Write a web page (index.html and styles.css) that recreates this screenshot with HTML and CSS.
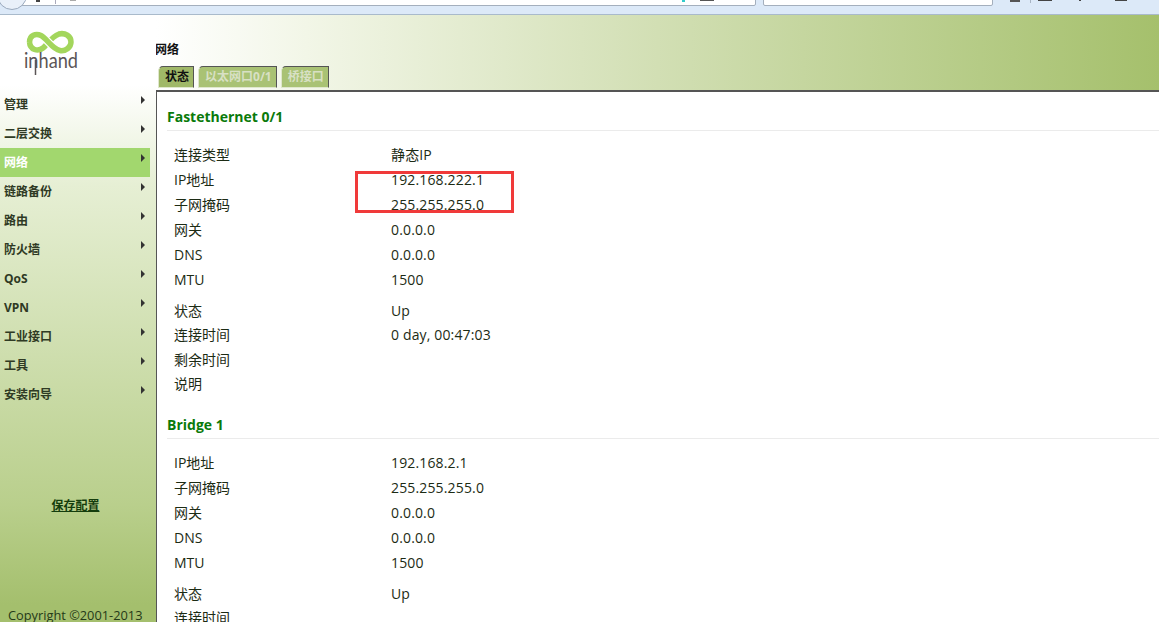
FILE: index.html
```html
<!DOCTYPE html>
<html lang="zh">
<head>
<meta charset="utf-8">
<title>网络</title>
<link rel="stylesheet" href="styles.css">
</head>
<body>
<div class="chrome">
  <div class="addr"></div>
  <div class="search"></div>
  <div class="back"></div>
  <span class="tick t1"></span>
  <span class="tick t2"></span>
  <span class="tick t3"></span>
  <span class="tick t4"></span>
  <span class="tick t5"></span>
  <span class="tick t6"></span>
  <span class="tick t7"></span>
  <span class="tick t8"></span>
  <span class="tick t9"></span>
  <span class="tick t10"></span>
</div>
<div class="page">
  <aside class="side">
    <div class="logo">
      <svg width="60" height="50" viewBox="22 28 60 50">
        <path class="band" d="M29.500 42C30 50 38 52 43 48C47 45 51 37 59 34C65 32.500 71 36 71 42"/>
        <path class="halo" d="M43 37C47 39.500 51 47 58 49.500"/>
        <path class="band" d="M29.500 42C29.500 35 36 33 41 35.500C47 38.500 52 49 60 50.500C66 51.500 71 47 71 42"/>
        <text x="24" y="68" class="logotext" textLength="54" lengthAdjust="spacingAndGlyphs">inhand</text>
        <line x1="35.500" y1="60" x2="35.500" y2="75" class="logostem"/>
      </svg>
    </div>
    <nav class="menu">
      <a class="item">管理<i></i></a>
      <a class="item">二层交换<i></i></a>
      <a class="item on">网络<i></i></a>
      <a class="item">链路备份<i></i></a>
      <a class="item">路由<i></i></a>
      <a class="item">防火墙<i></i></a>
      <a class="item">QoS<i></i></a>
      <a class="item">VPN<i></i></a>
      <a class="item">工业接口<i></i></a>
      <a class="item">工具<i></i></a>
      <a class="item">安装向导<i></i></a>
    </nav>
    <a class="save">保存配置</a>
    <div class="copy">Copyright ©2001-2013</div>
  </aside>
  <main class="main">
    <header class="head">
      <h1>网络</h1>
      <div class="tabs">
        <span class="tab active">状态</span>
        <span class="tab">以太网口0/1</span>
        <span class="tab">桥接口</span>
      </div>
    </header>
    <section class="content">
      <h2>Fastethernet 0/1</h2>
      <dl class="rows">
        <div><dt>连接类型</dt><dd>静态IP</dd></div>
        <div><dt>IP地址</dt><dd>192.168.222.1</dd></div>
        <div><dt>子网掩码</dt><dd>255.255.255.0</dd></div>
        <div><dt>网关</dt><dd>0.0.0.0</dd></div>
        <div><dt>DNS</dt><dd>0.0.0.0</dd></div>
        <div><dt>MTU</dt><dd>1500</dd></div>
      </dl>
      <dl class="rows second">
        <div><dt>状态</dt><dd>Up</dd></div>
        <div><dt>连接时间</dt><dd>0 day, 00:47:03</dd></div>
        <div><dt>剩余时间</dt><dd></dd></div>
        <div><dt>说明</dt><dd></dd></div>
      </dl>
      <h2 class="next">Bridge 1</h2>
      <dl class="rows">
        <div><dt>IP地址</dt><dd>192.168.2.1</dd></div>
        <div><dt>子网掩码</dt><dd>255.255.255.0</dd></div>
        <div><dt>网关</dt><dd>0.0.0.0</dd></div>
        <div><dt>DNS</dt><dd>0.0.0.0</dd></div>
        <div><dt>MTU</dt><dd>1500</dd></div>
      </dl>
      <dl class="rows second">
        <div><dt>状态</dt><dd>Up</dd></div>
        <div><dt>连接时间</dt><dd></dd></div>
      </dl>
      <div class="redbox"></div>
    </section>
  </main>
</div>
</body>
</html>
```
FILE: styles.css
```css
* { box-sizing: border-box; }
html, body { margin: 0; height: 100%; overflow: hidden; }
body { font-family: "Open Sans", "Noto Sans CJK SC", sans-serif; font-size: 14px; color: #1c2b14; background: #fff; }
.chrome { position: relative; height: 15px; background: #dce9f8; border-bottom: 1px solid #a9bacb; overflow: hidden; }
.back { position: absolute; left: -3px; top: -20px; width: 30px; height: 30px; border: 1px solid #9aa9bd; border-radius: 50%; background: #e9f0f9; }
.addr, .search { position: absolute; top: -10px; height: 16px; background: #fff; border: 1px solid #a4afbd; border-radius: 2px; }
.addr { left: 20px; width: 736px; }
.search { left: 763px; width: 230px; }
.tick { position: absolute; top: 0; background: #666; }
.t1 { left: 36px; width: 4px; height: 2px; background: #444; }
.t2 { left: 55px; width: 1px; height: 4px; background: #aab; }
.t3 { left: 70px; width: 6px; height: 1px; background: #aaa; }
.t4 { left: 682px; width: 3px; height: 2px; background: #3cc; }
.t5 { left: 700px; width: 14px; height: 1px; background: #555; }
.t6 { left: 1010px; width: 10px; height: 2px; background: #555; }
.t7 { left: 1030px; width: 1px; height: 3px; background: #a8b4c4; }
.t8 { left: 1038px; width: 14px; height: 1px; background: #444; }
.t9 { left: 1115px; width: 12px; height: 1px; background: #444; }
.t10 { left: 1079px; width: 2px; height: 1px; background: #444; }
.page { display: flex; height: 607px; }
.side { position: relative; flex: 0 0 156px; width: 156px; background: linear-gradient(180deg, #fff 0, #fff 70px, #e6efd4 170px, #b9cf8c 490px, #a4bf6d 590px); display: flex; flex-direction: column; }
.logo { height: 75px; padding: 13px 0 0 22px; }
.logo svg { display: block; overflow: visible; }
.band { fill: none; stroke: #a3d65c; stroke-width: 5.500; }
.halo { fill: none; stroke: #fff; stroke-width: 8; }
.logotext { font: 21px "Lato", sans-serif; fill: #5b5556; }
.logostem { stroke: #5b5556; stroke-width: 1.500; }
.menu { display: flex; flex-direction: column; }
.item { position: relative; height: 29px; line-height: 29px; padding-left: 4px; width: 150px; font-size: 12px; font-weight: 700; color: #2f3a24; }
.item i { position: absolute; left: 141px; top: 6px; border-left: 4px solid #333; border-top: 4px solid transparent; border-bottom: 4px solid transparent; }
.item.on { background: #a2d76e; color: #fff; }
.save { margin-top: 87px; text-align: center; font-size: 12px; font-weight: 700; text-decoration: underline; color: #143c0c; padding-right: 5px; }
.copy { position: absolute; left: 8px; top: 591px; font-size: 12.800px; color: #243a18; white-space: nowrap; }
.main { flex: 1; min-width: 0; display: flex; flex-direction: column; }
.head { height: 75px; background: linear-gradient(90deg, #fff 0, #f2f6e7 15%, #d2dfb4 50%, #a5c06c 100%); padding-top: 27px; }
.head h1 { margin: 0 0 8px -1px; font-size: 12px; font-weight: 700; line-height: 16px; color: #111; }
.tabs { display: flex; gap: 4px; padding-left: 2px; }
.tab { height: 22px; line-height: 20px; padding: 0 4px 0 6px; font-size: 12px; font-weight: 700; background: #a9c274; border: 1px solid #dfe7cc; border-top: 1px solid #555; border-right: 1px solid #555; border-top-left-radius: 5px; color: #d8e0c4; }
.tab.active { color: #111; background: #a0b868; }
.content { position: relative; flex: 1; border-top: 2px solid #555; border-left: 1px solid #555; padding-top: 15px; overflow: hidden; }
.content h2 { margin: 0 0 0 10px; padding-bottom: 5px; height: 24px; font-size: 14px; line-height: 20px; font-weight: 700; color: #0a7a0a; border-bottom: 1px solid #ebebeb; }
.content h2.next { margin-top: 19px; }
.rows { margin: 11px 0 0; }
.rows div { display: flex; height: 25px; line-height: 25px; }
.rows dt { width: 234px; padding-left: 17px; }
.rows dd { margin: 0; letter-spacing: 0.150px; }
.rows.second { margin-top: 7px; }
.rows.second div { height: 24.300px; line-height: 24.300px; }
.redbox { position: absolute; left: 198px; top: 79px; width: 159px; height: 42px; border: 3px solid #f03a3a; }
```
